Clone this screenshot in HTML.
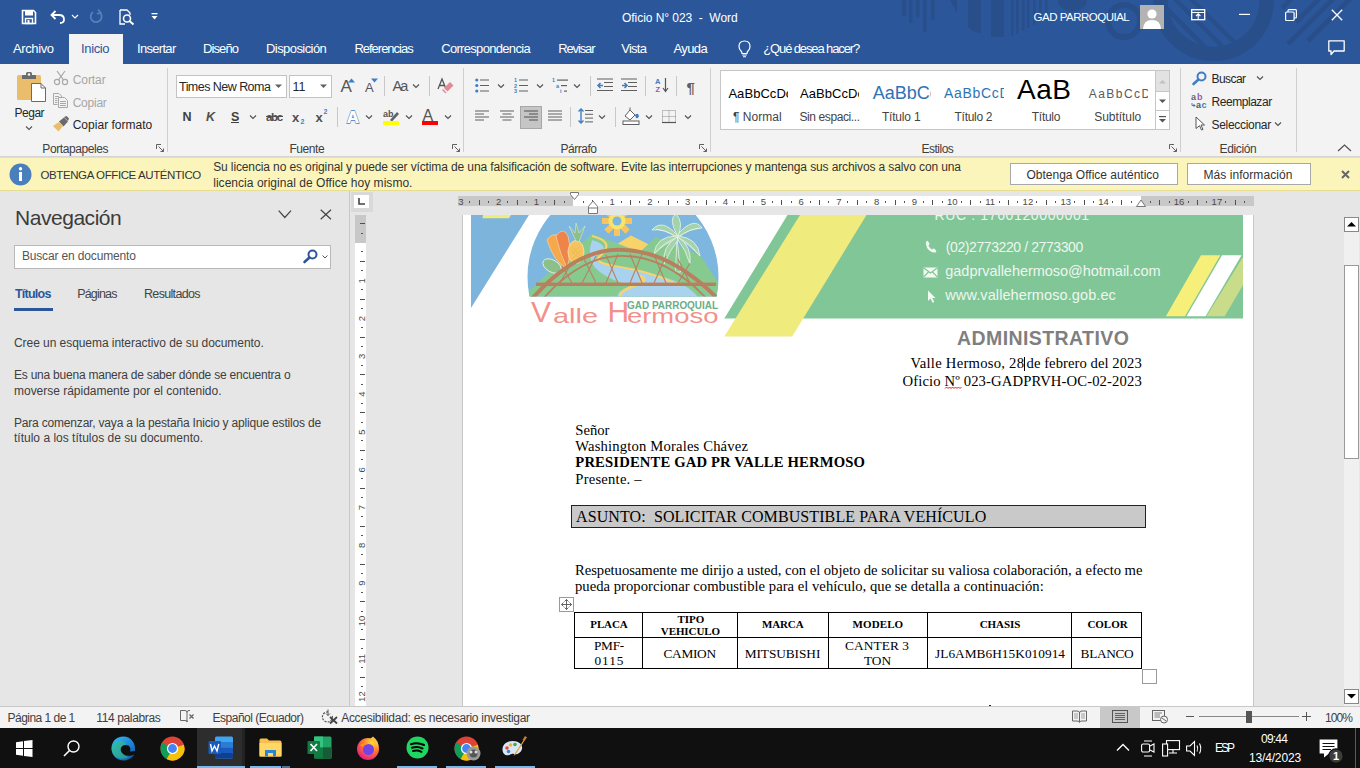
<!DOCTYPE html>
<html><head><meta charset="utf-8"><style>
html,body{margin:0;padding:0;width:1360px;height:768px;overflow:hidden;background:#e6e6e6}
.a{position:absolute}
.t{position:absolute;white-space:pre;line-height:1}
svg{position:absolute;overflow:visible}
</style></head><body>
<div class="a" style="left:0;top:0;width:1360px;height:64px;background:#2b579a"></div><svg class="a" style="left:0;top:0" width="1360" height="64" viewBox="0 0 1360 64">
<g fill="#294f8b">
<rect x="902" y="0" width="4" height="16"/><rect x="909" y="0" width="3.5" height="23"/><rect x="916" y="0" width="3.5" height="17"/>
<rect x="923" y="0" width="3.5" height="32"/><rect x="931" y="0" width="3.5" height="20"/>
<polygon points="950,0 957,0 957,13"/>
<path d="M968 0 H981 V33 Q974 33 968 27 Z"/>
<path d="M991 0 H1004 V37 H991 Z"/>
<rect x="1011" y="0" width="2.5" height="36"/><rect x="1016" y="0" width="2.5" height="34"/><rect x="1022" y="0" width="2.5" height="31"/><rect x="1027" y="0" width="2.5" height="28"/><rect x="1033" y="0" width="2.5" height="25"/><rect x="1039" y="0" width="2.5" height="21"/><rect x="1045" y="0" width="2.5" height="16"/>
<path d="M1058 0 A14 11 0 0 0 1087 0 Z"/>
</g>
<defs><clipPath id="tbin"><circle cx="1213.5" cy="1" r="46"/></clipPath></defs>
<g fill="none" stroke="#294f8b">
<circle cx="1124" cy="21" r="16" stroke-width="6"/>
<circle cx="1213.5" cy="1" r="53" stroke-width="14.5"/>
<g clip-path="url(#tbin)" stroke-width="4.5"><path d="M1150 -8 L1205 47 M1166 -10 L1222 46 M1180 -12 L1240 48"/></g>
<path d="M1282 8 L1292 -2 M1296 22 L1322 -4 M1288 44 L1336 -4 M1308 41 L1352 -3" stroke-width="5"/>
</g>
</svg><div class="a" style="left:69px;top:34px;width:54px;height:30px;background:#f3f3f3"></div><div class="a" style="left:0;top:64px;width:1360px;height:92px;background:#f3f3f3"></div><div class="a" style="left:0;top:156px;width:1360px;height:1px;background:#d4d4d4"></div><div class="a" style="left:0;top:157px;width:1360px;height:34px;background:#fcf5bb;border-top:1px solid #e9e19c;border-bottom:1px solid #e6dc92;box-sizing:border-box"></div><div class="a" style="left:0;top:191px;width:1360px;height:515px;background:#e6e6e6"></div><div class="a" style="left:349px;top:191px;width:1px;height:515px;background:#c8c8c8"></div><div class="a" style="left:0;top:706px;width:1360px;height:22px;background:#f3f3f3;border-top:1px solid #c8c8c8;box-sizing:border-box"></div><div class="a" style="left:0;top:728px;width:1360px;height:40px;background:#101010"></div><div class="t " style="left:622.00px;top:11.74px;font-size:12px;font-family:'Liberation Sans', sans-serif;font-weight:normal;color:#ffffff;letter-spacing:-0.047px;">Oficio N° 023  -  Word</div><div class="t " style="left:1033.50px;top:12.47px;font-size:11.5px;font-family:'Liberation Sans', sans-serif;font-weight:normal;color:#ffffff;letter-spacing:-0.494px;">GAD PARROQUIAL</div><div class="t " style="left:13.00px;top:42.00px;font-size:13px;font-family:'Liberation Sans', sans-serif;font-weight:normal;color:#ffffff;letter-spacing:-0.392px;">Archivo</div><div class="t " style="left:81.00px;top:42.00px;font-size:13px;font-family:'Liberation Sans', sans-serif;font-weight:normal;color:#2b579a;letter-spacing:-0.354px;">Inicio</div><div class="t " style="left:137.00px;top:42.00px;font-size:13px;font-family:'Liberation Sans', sans-serif;font-weight:normal;color:#ffffff;letter-spacing:-0.690px;">Insertar</div><div class="t " style="left:203.00px;top:42.00px;font-size:13px;font-family:'Liberation Sans', sans-serif;font-weight:normal;color:#ffffff;letter-spacing:-0.903px;">Diseño</div><div class="t " style="left:266.00px;top:42.00px;font-size:13px;font-family:'Liberation Sans', sans-serif;font-weight:normal;color:#ffffff;letter-spacing:-0.569px;">Disposición</div><div class="t " style="left:354.40px;top:42.00px;font-size:13px;font-family:'Liberation Sans', sans-serif;font-weight:normal;color:#ffffff;letter-spacing:-1.006px;">Referencias</div><div class="t " style="left:441.20px;top:42.00px;font-size:13px;font-family:'Liberation Sans', sans-serif;font-weight:normal;color:#ffffff;letter-spacing:-0.683px;">Correspondencia</div><div class="t " style="left:558.20px;top:42.00px;font-size:13px;font-family:'Liberation Sans', sans-serif;font-weight:normal;color:#ffffff;letter-spacing:-1.118px;">Revisar</div><div class="t " style="left:621.20px;top:42.00px;font-size:13px;font-family:'Liberation Sans', sans-serif;font-weight:normal;color:#ffffff;letter-spacing:-0.748px;">Vista</div><div class="t " style="left:673.50px;top:42.00px;font-size:13px;font-family:'Liberation Sans', sans-serif;font-weight:normal;color:#ffffff;letter-spacing:-0.606px;">Ayuda</div><div class="t " style="left:763.20px;top:42.00px;font-size:13px;font-family:'Liberation Sans', sans-serif;font-weight:normal;color:#ffffff;letter-spacing:-1.115px;">¿Qué desea hacer?</div><svg style="left:21px;top:9px" width="16" height="16" viewBox="0 0 16 16"><path d="M1.5 1.5 H12.5 L14.5 3.5 V14.5 H1.5 Z" fill="none" stroke="#fff" stroke-width="1.6"/><rect x="4" y="1.5" width="8" height="5" fill="#fff"/><rect x="4.5" y="9.5" width="7" height="5" fill="none" stroke="#fff" stroke-width="1.4"/><rect x="6.5" y="11" width="2" height="3.5" fill="#fff"/></svg><svg style="left:50px;top:9px" width="16" height="15" viewBox="0 0 16 15"><path d="M2 6 H9 Q14 6 14 10.5 Q14 14 10 14" fill="none" stroke="#fff" stroke-width="1.8"/><path d="M5.5 2 L1.5 6 L5.5 10" fill="none" stroke="#fff" stroke-width="1.8"/></svg><svg style="left:71px;top:14px" width="8" height="5" viewBox="0 0 8 5"><path d="M1 1 L4 4 L7 1" fill="none" stroke="#fff" stroke-width="1.1"/></svg><svg style="left:89px;top:9px" width="15" height="15" viewBox="0 0 15 15"><path d="M10.5 3.2 A5.5 5.5 0 1 1 4 3" fill="none" stroke="#5a7fb8" stroke-width="1.8"/><path d="M9 0.5 L11.5 3.5 L8 5" fill="none" stroke="#5a7fb8" stroke-width="1.6"/></svg><svg style="left:119px;top:9px" width="16" height="16" viewBox="0 0 16 16"><path d="M1 1 H8 L11 4 V6 M1 1 V15 H6" fill="none" stroke="#fff" stroke-width="1.3"/><circle cx="8" cy="9.5" r="3.5" fill="none" stroke="#fff" stroke-width="1.6"/><path d="M10.5 12 L14.5 15.5" stroke="#fff" stroke-width="2"/></svg><svg style="left:151px;top:13px" width="8" height="8" viewBox="0 0 8 8"><rect x="0.5" y="0" width="6" height="1.3" fill="#fff"/><path d="M0.5 3 H6.5 L3.5 6.5 Z" fill="#fff"/></svg><div class="a" style="left:1140px;top:5px;width:24px;height:24px;background:#b3b3b3;overflow:hidden"><svg style="left:0;top:0" width="24" height="24" viewBox="0 0 24 24"><circle cx="12" cy="9" r="4.6" fill="#fff"/><path d="M3 24 Q3.5 15 12 15 Q20.5 15 21 24 Z" fill="#fff"/></svg></div><svg style="left:1191px;top:9px" width="15" height="12" viewBox="0 0 15 12"><rect x="0.7" y="0.7" width="13" height="10" fill="none" stroke="#fff" stroke-width="1.3"/><path d="M0.7 3.5 H13.7" stroke="#fff" stroke-width="1"/><path d="M7.2 10 V5 M5 7 L7.2 4.8 L9.4 7" fill="none" stroke="#fff" stroke-width="1.1"/></svg><svg style="left:1239px;top:13px" width="11" height="3" viewBox="0 0 11 3"><rect x="0" y="0.8" width="11" height="1.2" fill="#fff"/></svg><svg style="left:1285px;top:9px" width="12" height="12" viewBox="0 0 12 12"><rect x="0.6" y="3" width="8.5" height="8.5" rx="1" fill="none" stroke="#fff" stroke-width="1.2"/><path d="M3 3 V1.5 Q3 0.6 4 0.6 H10.5 Q11.4 0.6 11.4 1.5 V8 Q11.4 9 10.5 9 H9" fill="none" stroke="#fff" stroke-width="1.2"/></svg><svg style="left:1331px;top:9px" width="12" height="12" viewBox="0 0 12 12"><path d="M0.8 0.8 L11.2 11.2 M11.2 0.8 L0.8 11.2" stroke="#fff" stroke-width="1.3"/></svg><svg style="left:1328px;top:40px" width="18" height="17" viewBox="0 0 18 17"><path d="M0.8 0.8 H16.2 V11 H6 L3 14.5 V11 H0.8 Z" fill="none" stroke="#fff" stroke-width="1.3" stroke-linejoin="round"/></svg><svg style="left:737px;top:40px" width="15" height="18" viewBox="0 0 15 18"><path d="M7.5 1 Q13 1 13 6.5 Q13 9 11 11 Q10 12 10 13.5 H5 Q5 12 4 11 Q2 9 2 6.5 Q2 1 7.5 1 Z" fill="none" stroke="#fff" stroke-width="1.2"/><path d="M5.2 15 H9.8 M6 16.8 H9" stroke="#fff" stroke-width="1.1"/></svg><svg style="left:9px;top:163px" width="23" height="23" viewBox="0 0 23 23"><circle cx="11.5" cy="11.5" r="11" fill="#4a7fbd"/><rect x="10" y="9" width="3" height="9" fill="#fff"/><circle cx="11.5" cy="5.8" r="1.7" fill="#fff"/></svg><div class="t " style="left:40.50px;top:169.87px;font-size:11.5px;font-family:'Liberation Sans', sans-serif;font-weight:normal;color:#333;letter-spacing:-0.401px;">OBTENGA OFFICE AUTÉNTICO</div><div class="t " style="left:213.20px;top:160.84px;font-size:12px;font-family:'Liberation Sans', sans-serif;font-weight:normal;color:#333;letter-spacing:-0.120px;">Su licencia no es original y puede ser víctima de una falsificación de software. Evite las interrupciones y mantenga sus archivos a salvo con una</div><div class="t " style="left:213.20px;top:177.04px;font-size:12px;font-family:'Liberation Sans', sans-serif;font-weight:normal;color:#333;letter-spacing:0.038px;">licencia original de Office hoy mismo.</div><div class="a" style="left:1010px;top:163px;width:168px;height:22px;background:#fff;border:1px solid #a8a8a8;box-sizing:border-box"></div><div class="t " style="left:1026.50px;top:169.04px;font-size:12px;font-family:'Liberation Sans', sans-serif;font-weight:normal;color:#333;letter-spacing:-0.001px;">Obtenga Office auténtico</div><div class="a" style="left:1187px;top:163px;width:124px;height:22px;background:#fff;border:1px solid #a8a8a8;box-sizing:border-box"></div><div class="t " style="left:1203.40px;top:169.44px;font-size:12px;font-family:'Liberation Sans', sans-serif;font-weight:normal;color:#333;letter-spacing:0.067px;">Más información</div><svg style="left:1341px;top:170px" width="9" height="9" viewBox="0 0 9 9"><path d="M1 1 L8 8 M8 1 L1 8" stroke="#666" stroke-width="2"/></svg><div class="a" style="left:167px;top:68px;width:1px;height:84px;background:#cfcfcf"></div><div class="a" style="left:463px;top:68px;width:1px;height:84px;background:#cfcfcf"></div><div class="a" style="left:710px;top:68px;width:1px;height:84px;background:#cfcfcf"></div><div class="a" style="left:1180px;top:68px;width:1px;height:84px;background:#cfcfcf"></div><div class="a" style="left:1296px;top:68px;width:1px;height:84px;background:#cfcfcf"></div><svg style="left:16px;top:71px;" width="32" height="33" viewBox="0 0 32 33">
<rect x="1" y="4" width="24" height="25" rx="1.5" fill="#e9bd6b"/>
<path d="M6 8 V5 Q6 4 7 4 H10 V2.5 Q10 1 11.5 1 H14.5 Q16 1 16 2.5 V4 H19 Q20 4 20 5 V8 Z" fill="#6a6a6a"/>
<circle cx="13" cy="3.5" r="1.3" fill="#f3f3f3"/>
<path d="M15.5 12.5 H25 L29.5 17 V30.5 H15.5 Z" fill="#fff" stroke="#6a6a6a" stroke-width="1"/>
<path d="M25 12.5 V17 H29.5" fill="none" stroke="#6a6a6a" stroke-width="1"/>
</svg><div class="t " style="left:14.60px;top:107.14px;font-size:12px;font-family:'Liberation Sans', sans-serif;font-weight:normal;color:#262626;letter-spacing:-0.516px;">Pegar</div><svg style="left:25px;top:125px" width="8" height="6" viewBox="0 0 8 6"><path d="M1 1.5 L4 4.5 L7 1.5" fill="none" stroke="#555" stroke-width="1.1"/></svg><svg style="left:53px;top:70px;" width="16" height="16" viewBox="0 0 16 16"><g fill="none" stroke="#a8a8a8" stroke-width="1.2"><circle cx="4" cy="12" r="2.6"/><circle cx="12" cy="12" r="2.6"/><path d="M5.5 9.8 L12 1 M10.5 9.8 L4 1"/></g></svg><div class="t " style="left:72.70px;top:73.74px;font-size:12px;font-family:'Liberation Sans', sans-serif;font-weight:normal;color:#a6a6a6;letter-spacing:-0.062px;">Cortar</div><svg style="left:53px;top:93px;" width="16" height="15" viewBox="0 0 16 15"><g fill="none" stroke="#a8a8a8" stroke-width="1"><path d="M0.5 0.5 H6 L8.5 3 V4.5 M0.5 0.5 V11.5 H4.5"/><path d="M2 3.5 H6 M2 5.5 H4.5 M2 7.5 H4.5 M2 9.5 H4.5"/><path d="M5.5 4.5 H11.5 L14.5 7.5 V14.5 H5.5 Z"/><path d="M7 8.5 H13 M7 10.5 H13 M7 12.5 H13"/></g></svg><div class="t " style="left:72.70px;top:96.74px;font-size:12px;font-family:'Liberation Sans', sans-serif;font-weight:normal;color:#a6a6a6;letter-spacing:-0.245px;">Copiar</div><svg style="left:52px;top:116px;" width="18" height="16" viewBox="0 0 18 16"><path d="M12 1 L14.5 0 L17 2.5 L16 5 Z" fill="#6a6a6a"/><path d="M7 5.5 L12 1.5 L16 5.5 L11.5 10.5 Z" fill="#6a6a6a"/><path d="M1 10 L7 6 L11 10 L6.5 15.5 Z" fill="#e9bd6b"/></svg><div class="t " style="left:72.70px;top:119.29px;font-size:12px;font-family:'Liberation Sans', sans-serif;font-weight:normal;color:#262626;letter-spacing:0.017px;">Copiar formato</div><div class="t " style="left:42.30px;top:143.34px;font-size:12px;font-family:'Liberation Sans', sans-serif;font-weight:normal;color:#404040;letter-spacing:-0.410px;">Portapapeles</div><svg style="left:156px;top:144px;" width="9" height="9" viewBox="0 0 9 9"><path d="M0.5 0.5 H5 M0.5 0.5 V5 M2.5 2.5 L7.5 7.5 M4.5 7.5 H7.5 V4.5" fill="none" stroke="#606060" stroke-width="1"/></svg><div class="a" style="left:176px;top:75px;width:111px;height:23px;background:#fff;border:1px solid #c3c3c3;box-sizing:border-box"></div><div class="a" style="left:289px;top:75px;width:43px;height:23px;background:#fff;border:1px solid #c3c3c3;box-sizing:border-box"></div><div class="t " style="left:179.00px;top:81.12px;font-size:12.5px;font-family:'Liberation Sans', sans-serif;font-weight:normal;color:#262626;letter-spacing:-0.538px;">Times New Roma</div><div class="t " style="left:292.50px;top:81.12px;font-size:12.5px;font-family:'Liberation Sans', sans-serif;font-weight:normal;color:#262626;">11</div><svg style="left:275px;top:84px;" width="8" height="5" viewBox="0 0 8 5"><path d="M0 0.5 H7 L3.5 4 Z" fill="#606060"/></svg><svg style="left:320px;top:84px;" width="8" height="5" viewBox="0 0 8 5"><path d="M0 0.5 H7 L3.5 4 Z" fill="#606060"/></svg><div class="t " style="left:340.50px;top:77.91px;font-size:17px;font-family:'Liberation Sans', sans-serif;font-weight:normal;color:#555555;">A</div><svg style="left:348px;top:78px;" width="8" height="5" viewBox="0 0 8 5"><path d="M0 4.5 H7 L3.5 0.5 Z" fill="#3f7ec4"/></svg><div class="t " style="left:365.00px;top:81.30px;font-size:13px;font-family:'Liberation Sans', sans-serif;font-weight:normal;color:#555555;">A</div><svg style="left:371px;top:78px;" width="8" height="5" viewBox="0 0 8 5"><path d="M0 0.5 H7 L3.5 4.5 Z" fill="#3f7ec4"/></svg><div class="a" style="left:384px;top:76px;width:1px;height:20px;background:#c8c8c8"></div><div class="t " style="left:392.50px;top:78.93px;font-size:14.5px;font-family:'Liberation Sans', sans-serif;font-weight:normal;color:#555555;letter-spacing:-1.957px;">Aa</div><svg style="left:412px;top:83px" width="8" height="6" viewBox="0 0 8 6"><path d="M1 1.5 L4 4.5 L7 1.5" fill="none" stroke="#505050" stroke-width="1.1"/></svg><div class="a" style="left:429px;top:76px;width:1px;height:20px;background:#c8c8c8"></div><svg style="left:437px;top:78px;" width="17" height="16" viewBox="0 0 17 16"><path d="M1 11 L5 1 L9 11 M2.5 7.5 H7.5" fill="none" stroke="#555" stroke-width="1.3"/><path d="M7 10 L13 4 L16.5 7.5 L10.5 13.5 Z" fill="#e48a96"/><path d="M6 11 L9.5 14.5 L8.5 15.5 L5 12 Z" fill="#e48a96"/></svg><div class="t " style="left:182.50px;top:111.02px;font-size:12.5px;font-family:'Liberation Sans', sans-serif;font-weight:bold;color:#404040;">N</div><div class="t " style="left:206.00px;top:111.02px;font-size:12.5px;font-family:'Liberation Sans', sans-serif;font-weight:bold;color:#505050;font-style:italic">K</div><div class="t " style="left:231.00px;top:111.02px;font-size:12.5px;font-family:'Liberation Sans', sans-serif;font-weight:bold;color:#404040;">S</div><div class="a" style="left:231px;top:122px;width:8px;height:1.3px;background:#404040"></div><svg style="left:249px;top:114px" width="8" height="6" viewBox="0 0 8 6"><path d="M1 1.5 L4 4.5 L7 1.5" fill="none" stroke="#505050" stroke-width="1.1"/></svg><div class="t " style="left:266.00px;top:111.87px;font-size:11.5px;font-family:'Liberation Sans', sans-serif;font-weight:bold;color:#505050;letter-spacing:-1.326px;">abc</div><div class="a" style="left:266px;top:116px;width:17px;height:1px;background:#505050"></div><div class="t " style="left:292.00px;top:110.60px;font-size:13px;font-family:'Liberation Sans', sans-serif;font-weight:bold;color:#505050;">x</div><div class="t " style="left:300.50px;top:117.77px;font-size:7px;font-family:'Liberation Sans', sans-serif;font-weight:bold;color:#3f7ec4;">2</div><div class="t " style="left:315.60px;top:110.60px;font-size:13px;font-family:'Liberation Sans', sans-serif;font-weight:bold;color:#505050;">x</div><div class="t " style="left:323.50px;top:107.77px;font-size:7px;font-family:'Liberation Sans', sans-serif;font-weight:bold;color:#3f7ec4;">2</div><div class="a" style="left:337px;top:107px;width:1px;height:20px;background:#c8c8c8"></div><svg style="left:345px;top:108px;" width="16" height="16" viewBox="0 0 16 16"><text x="8" y="14.5" text-anchor="middle" font-family="Liberation Sans" font-weight="bold" font-size="17" fill="#fff" stroke="#3f7ec4" stroke-width="1.4" paint-order="stroke">A</text><text x="8" y="14.5" text-anchor="middle" font-family="Liberation Sans" font-weight="bold" font-size="17" fill="#fff">A</text></svg><svg style="left:365px;top:114px" width="8" height="6" viewBox="0 0 8 6"><path d="M1 1.5 L4 4.5 L7 1.5" fill="none" stroke="#505050" stroke-width="1.1"/></svg><svg style="left:383px;top:109px;" width="17" height="17" viewBox="0 0 17 17"><text x="0" y="8" font-family="Liberation Sans" font-weight="bold" font-size="9" fill="#555">ab</text><path d="M7 11 L14 3 L16 5 L9 12.5 Z" fill="#606060"/><rect x="0" y="12" width="16" height="4" fill="#ffff00"/></svg><svg style="left:405px;top:114px" width="8" height="6" viewBox="0 0 8 6"><path d="M1 1.5 L4 4.5 L7 1.5" fill="none" stroke="#505050" stroke-width="1.1"/></svg><div class="t " style="left:422.50px;top:107.66px;font-size:16px;font-family:'Liberation Sans', sans-serif;font-weight:normal;color:#555555;">A</div><div class="a" style="left:422px;top:121px;width:16px;height:4px;background:#ff0000"></div><svg style="left:444px;top:114px" width="8" height="6" viewBox="0 0 8 6"><path d="M1 1.5 L4 4.5 L7 1.5" fill="none" stroke="#505050" stroke-width="1.1"/></svg><div class="t " style="left:289.40px;top:143.44px;font-size:12px;font-family:'Liberation Sans', sans-serif;font-weight:normal;color:#404040;letter-spacing:-0.429px;">Fuente</div><svg style="left:452px;top:144px;" width="9" height="9" viewBox="0 0 9 9"><path d="M0.5 0.5 H5 M0.5 0.5 V5 M2.5 2.5 L7.5 7.5 M4.5 7.5 H7.5 V4.5" fill="none" stroke="#606060" stroke-width="1"/></svg><svg style="left:475px;top:78px;" width="15" height="15" viewBox="0 0 15 15"><circle cx="1.8" cy="2" r="1.6" fill="#3f7ec4"/><circle cx="1.8" cy="7.5" r="1.6" fill="#3f7ec4"/><circle cx="1.8" cy="13" r="1.6" fill="#3f7ec4"/><rect x="5" y="1.5" width="9" height="1" fill="#606060"/><rect x="5" y="7.0" width="9" height="1" fill="#606060"/><rect x="5" y="12.5" width="9" height="1" fill="#606060"/></svg><svg style="left:497px;top:83px" width="8" height="6" viewBox="0 0 8 6"><path d="M1 1.5 L4 4.5 L7 1.5" fill="none" stroke="#505050" stroke-width="1.1"/></svg><svg style="left:514px;top:77px;" width="15" height="16" viewBox="0 0 15 16"><text x="0" y="5" font-size="5.5" font-family="Liberation Sans" font-weight="bold" fill="#3f7ec4">1</text><text x="0" y="10.5" font-size="5.5" font-family="Liberation Sans" font-weight="bold" fill="#3f7ec4">2</text><text x="0" y="16" font-size="5.5" font-family="Liberation Sans" font-weight="bold" fill="#3f7ec4">3</text><rect x="5" y="2.5" width="9" height="1" fill="#606060"/><rect x="5" y="8.0" width="9" height="1" fill="#606060"/><rect x="5" y="13.5" width="9" height="1" fill="#606060"/></svg><svg style="left:536px;top:83px" width="8" height="6" viewBox="0 0 8 6"><path d="M1 1.5 L4 4.5 L7 1.5" fill="none" stroke="#505050" stroke-width="1.1"/></svg><svg style="left:552px;top:77px;" width="17" height="16" viewBox="0 0 17 16"><text x="0" y="5" font-size="5.5" font-family="Liberation Sans" font-weight="bold" fill="#3f7ec4">1</text><text x="4" y="10.5" font-size="5.5" font-family="Liberation Sans" font-weight="bold" fill="#3f7ec4">a</text><text x="8" y="16" font-size="5.5" font-family="Liberation Sans" font-weight="bold" fill="#3f7ec4">i</text><rect x="5" y="2.5" width="11" height="1.2" fill="#606060"/><rect x="9" y="8" width="6" height="1.2" fill="#606060"/><rect x="12" y="13.5" width="3" height="1.2" fill="#606060"/></svg><svg style="left:573px;top:83px" width="8" height="6" viewBox="0 0 8 6"><path d="M1 1.5 L4 4.5 L7 1.5" fill="none" stroke="#505050" stroke-width="1.1"/></svg><div class="a" style="left:590px;top:76px;width:1px;height:20px;background:#c8c8c8"></div><svg style="left:597px;top:78px;" width="17" height="14" viewBox="0 0 17 14"><rect x="0" y="0.5" width="16" height="1" fill="#606060"/><rect x="7" y="4" width="9" height="1" fill="#606060"/><rect x="7" y="8" width="9" height="1" fill="#606060"/><rect x="0" y="12" width="16" height="1" fill="#606060"/><path d="M6 7.5 H1 M3.5 5 L1 7.5 L3.5 10" fill="none" stroke="#3f7ec4" stroke-width="1.6"/></svg><svg style="left:621px;top:78px;" width="17" height="14" viewBox="0 0 17 14"><rect x="0" y="0.5" width="16" height="1" fill="#606060"/><rect x="7" y="4" width="9" height="1" fill="#606060"/><rect x="7" y="8" width="9" height="1" fill="#606060"/><rect x="0" y="12" width="16" height="1" fill="#606060"/><path d="M1 7.5 H6 M3.5 5 L6 7.5 L3.5 10" fill="none" stroke="#3f7ec4" stroke-width="1.6"/></svg><div class="a" style="left:645px;top:76px;width:1px;height:20px;background:#c8c8c8"></div><svg style="left:655px;top:77px;" width="14" height="16" viewBox="0 0 14 16"><text x="0" y="7" font-size="7.5" font-family="Liberation Sans" font-weight="bold" fill="#3f7ec4">A</text><text x="0.5" y="15" font-size="7.5" font-family="Liberation Sans" font-weight="bold" fill="#8b5fb8">Z</text><path d="M10.5 1 V14 M8 11 L10.5 14.5 L13 11" fill="none" stroke="#555" stroke-width="1.2"/></svg><div class="a" style="left:676px;top:76px;width:1px;height:20px;background:#c8c8c8"></div><div class="t " style="left:686.50px;top:80.00px;font-size:15px;font-family:'Liberation Sans', sans-serif;font-weight:bold;color:#606060;">¶</div><svg style="left:475px;top:110px;" width="15" height="12" viewBox="0 0 15 12"><rect x="0" y="0.5" width="14" height="1" fill="#606060"/><rect x="0" y="3.5" width="9" height="1" fill="#606060"/><rect x="0" y="6.5" width="14" height="1" fill="#606060"/><rect x="0" y="9.5" width="9" height="1" fill="#606060"/></svg><svg style="left:500px;top:110px;" width="15" height="12" viewBox="0 0 15 12"><rect x="0" y="0.5" width="14" height="1" fill="#606060"/><rect x="2.5" y="3.5" width="9" height="1" fill="#606060"/><rect x="0" y="6.5" width="14" height="1" fill="#606060"/><rect x="2.5" y="9.5" width="9" height="1" fill="#606060"/></svg><div class="a" style="left:520px;top:106px;width:22px;height:23px;background:#c5c5c5;border:1px solid #a8a8a8;box-sizing:border-box"></div><svg style="left:524px;top:110px;" width="15" height="12" viewBox="0 0 15 12"><rect x="0" y="0.5" width="14" height="1" fill="#505050"/><rect x="5" y="3.5" width="9" height="1" fill="#505050"/><rect x="0" y="6.5" width="14" height="1" fill="#505050"/><rect x="5" y="9.5" width="9" height="1" fill="#505050"/></svg><svg style="left:548px;top:110px;" width="15" height="12" viewBox="0 0 15 12"><rect x="0" y="0.5" width="14" height="1" fill="#606060"/><rect x="0" y="3.5" width="14" height="1" fill="#606060"/><rect x="0" y="6.5" width="14" height="1" fill="#606060"/><rect x="0" y="9.5" width="14" height="1" fill="#606060"/></svg><div class="a" style="left:570px;top:107px;width:1px;height:20px;background:#c8c8c8"></div><svg style="left:578px;top:108px;" width="16" height="16" viewBox="0 0 16 16"><path d="M3 1 V15 M0.5 3.5 L3 1 L5.5 3.5 M0.5 12.5 L3 15 L5.5 12.5" fill="none" stroke="#3f7ec4" stroke-width="1.4"/><rect x="7" y="2.0" width="8" height="1" fill="#606060"/><rect x="7" y="5.8" width="8" height="1" fill="#606060"/><rect x="7" y="9.6" width="8" height="1" fill="#606060"/><rect x="7" y="13.399999999999999" width="8" height="1" fill="#606060"/></svg><svg style="left:598px;top:114px" width="8" height="6" viewBox="0 0 8 6"><path d="M1 1.5 L4 4.5 L7 1.5" fill="none" stroke="#505050" stroke-width="1.1"/></svg><div class="a" style="left:615px;top:107px;width:1px;height:20px;background:#c8c8c8"></div><svg style="left:622px;top:107px;" width="18" height="18" viewBox="0 0 18 18"><path d="M3 9 L8 3 L13 8 L8 13 Z" fill="#fff" stroke="#606060" stroke-width="1"/><path d="M8 3 V0.5" stroke="#606060"/><path d="M13 8 Q16 5 17 9 Q16 12 14 11 Z" fill="#3f7ec4"/><rect x="1" y="14" width="16" height="3.5" fill="#fff" stroke="#606060" stroke-width="1"/></svg><svg style="left:645px;top:114px" width="8" height="6" viewBox="0 0 8 6"><path d="M1 1.5 L4 4.5 L7 1.5" fill="none" stroke="#505050" stroke-width="1.1"/></svg><svg style="left:662px;top:110px;" width="15" height="14" viewBox="0 0 15 14"><rect x="0.5" y="0.5" width="13" height="12" fill="none" stroke="#888" stroke-width="1" stroke-dasharray="1 1"/><path d="M7 0.5 V12.5 M0.5 6.5 H13.5" stroke="#888" stroke-dasharray="1 1"/><path d="M0 12.5 H14" stroke="#555" stroke-width="1.2"/></svg><svg style="left:684px;top:114px" width="8" height="6" viewBox="0 0 8 6"><path d="M1 1.5 L4 4.5 L7 1.5" fill="none" stroke="#505050" stroke-width="1.1"/></svg><div class="t " style="left:560.40px;top:143.14px;font-size:12px;font-family:'Liberation Sans', sans-serif;font-weight:normal;color:#404040;letter-spacing:-0.469px;">Párrafo</div><svg style="left:699px;top:144px;" width="9" height="9" viewBox="0 0 9 9"><path d="M0.5 0.5 H5 M0.5 0.5 V5 M2.5 2.5 L7.5 7.5 M4.5 7.5 H7.5 V4.5" fill="none" stroke="#606060" stroke-width="1"/></svg><div class="a" style="left:720px;top:70px;width:450px;height:60px;background:#fff;border:1px solid #c6c6c6;box-sizing:border-box"></div><div class="a" style="left:1155px;top:70px;width:15px;height:60px;border:1px solid #c6c6c6;box-sizing:border-box;background:#fff"></div><div class="a" style="left:1156px;top:71px;width:13px;height:20px;background:#e2e2e2"></div><div class="a" style="left:1155px;top:91px;width:15px;height:1px;background:#c6c6c6"></div><div class="a" style="left:1155px;top:110px;width:15px;height:1px;background:#c6c6c6"></div><svg style="left:1159px;top:79px;" width="8" height="5" viewBox="0 0 8 5"><path d="M0 4.5 H7 L3.5 1 Z" fill="#c0c0c0"/></svg><svg style="left:1159px;top:99px;" width="8" height="5" viewBox="0 0 8 5"><path d="M0 0.5 H7 L3.5 4 Z" fill="#555"/></svg><svg style="left:1159px;top:116px;" width="8" height="8" viewBox="0 0 8 8"><rect x="0" y="0" width="7" height="1.2" fill="#555"/><path d="M0 3 H7 L3.5 6.5 Z" fill="#555"/></svg><div class="a" style="left:728px;top:72px;width:60px;height:36px;overflow:hidden"><div class="t " style="left:0.40px;top:14.90px;font-size:13px;font-family:'Liberation Sans', sans-serif;font-weight:normal;color:#000;letter-spacing:0.056px;">AaBbCcDc</div></div><div class="a" style="left:800px;top:72px;width:59px;height:36px;overflow:hidden"><div class="t " style="left:0.00px;top:14.90px;font-size:13px;font-family:'Liberation Sans', sans-serif;font-weight:normal;color:#000;letter-spacing:0.056px;">AaBbCcDc</div></div><div class="a" style="left:872px;top:72px;width:59px;height:36px;overflow:hidden"><div class="t " style="left:0.70px;top:12.06px;font-size:18px;font-family:'Liberation Sans', sans-serif;font-weight:normal;color:#2e74b5;letter-spacing:-0.006px;">AaBbCc</div></div><div class="a" style="left:944px;top:72px;width:60px;height:36px;overflow:hidden"><div class="t " style="left:0.00px;top:14.05px;font-size:14px;font-family:'Liberation Sans', sans-serif;font-weight:normal;color:#2e74b5;letter-spacing:0.697px;">AaBbCcD</div></div><div class="t " style="left:1017.00px;top:75.60px;font-size:28px;font-family:'Liberation Sans', sans-serif;font-weight:normal;color:#000;letter-spacing:0.550px;">AaB</div><div class="a" style="left:1088px;top:72px;width:60px;height:36px;overflow:hidden"><div class="t " style="left:0.80px;top:15.74px;font-size:12px;font-family:'Liberation Sans', sans-serif;font-weight:normal;color:#5a5a5a;letter-spacing:1.433px;">AaBbCcD</div></div><div class="t " style="left:733.00px;top:111.24px;font-size:12px;font-family:'Liberation Sans', sans-serif;font-weight:normal;color:#444;letter-spacing:0.033px;">¶ Normal</div><div class="t " style="left:799.50px;top:111.24px;font-size:12px;font-family:'Liberation Sans', sans-serif;font-weight:normal;color:#444;letter-spacing:-0.405px;">Sin espaci...</div><div class="t " style="left:881.90px;top:111.24px;font-size:12px;font-family:'Liberation Sans', sans-serif;font-weight:normal;color:#444;letter-spacing:-0.189px;">Título 1</div><div class="t " style="left:954.60px;top:111.24px;font-size:12px;font-family:'Liberation Sans', sans-serif;font-weight:normal;color:#444;letter-spacing:-0.309px;">Título 2</div><div class="t " style="left:1031.80px;top:111.24px;font-size:12px;font-family:'Liberation Sans', sans-serif;font-weight:normal;color:#444;letter-spacing:-0.275px;">Título</div><div class="t " style="left:1094.30px;top:111.24px;font-size:12px;font-family:'Liberation Sans', sans-serif;font-weight:normal;color:#444;letter-spacing:-0.055px;">Subtítulo</div><div class="t " style="left:921.40px;top:142.94px;font-size:12px;font-family:'Liberation Sans', sans-serif;font-weight:normal;color:#404040;letter-spacing:-0.484px;">Estilos</div><svg style="left:1169px;top:144px;" width="9" height="9" viewBox="0 0 9 9"><path d="M0.5 0.5 H5 M0.5 0.5 V5 M2.5 2.5 L7.5 7.5 M4.5 7.5 H7.5 V4.5" fill="none" stroke="#606060" stroke-width="1"/></svg><svg style="left:1192px;top:71px;" width="16" height="14" viewBox="0 0 16 14"><circle cx="9.5" cy="5.5" r="4" fill="none" stroke="#3f7ec4" stroke-width="2"/><path d="M6.5 8.5 L1.5 13" stroke="#3f7ec4" stroke-width="2.6" stroke-linecap="round"/></svg><div class="t " style="left:1211.50px;top:72.94px;font-size:12px;font-family:'Liberation Sans', sans-serif;font-weight:normal;color:#262626;letter-spacing:-0.572px;">Buscar</div><svg style="left:1256px;top:75px" width="8" height="6" viewBox="0 0 8 6"><path d="M1 1.5 L4 4.5 L7 1.5" fill="none" stroke="#505050" stroke-width="1.1"/></svg><svg style="left:1191px;top:93px;" width="18" height="16" viewBox="0 0 18 16"><text x="0" y="7" font-family="Liberation Sans" font-weight="bold" font-size="9" fill="#666">a</text><text x="6" y="7" font-family="Liberation Sans" font-weight="bold" font-size="9" fill="#8b5fb8">b</text><text x="5" y="15" font-family="Liberation Sans" font-weight="bold" font-size="9" fill="#555">a</text><text x="10.5" y="15" font-family="Liberation Sans" font-weight="bold" font-size="9" fill="#3f7ec4">c</text><path d="M1 10 V12.5 H4 M2.5 11 L4 12.5 L2.5 14" fill="none" stroke="#3f7ec4" stroke-width="1"/></svg><div class="t " style="left:1211.50px;top:96.14px;font-size:12px;font-family:'Liberation Sans', sans-serif;font-weight:normal;color:#262626;letter-spacing:-0.452px;">Reemplazar</div><svg style="left:1195px;top:116px;" width="11" height="15" viewBox="0 0 11 15"><path d="M1 1 L9.5 9 H6 L8 13.5 L6.5 14 L4.5 9.7 L1 12.5 Z" fill="#fff" stroke="#555" stroke-width="1"/></svg><div class="t " style="left:1211.50px;top:118.84px;font-size:12px;font-family:'Liberation Sans', sans-serif;font-weight:normal;color:#262626;letter-spacing:-0.305px;">Seleccionar</div><svg style="left:1274px;top:121px" width="8" height="6" viewBox="0 0 8 6"><path d="M1 1.5 L4 4.5 L7 1.5" fill="none" stroke="#505050" stroke-width="1.1"/></svg><div class="t " style="left:1219.60px;top:143.34px;font-size:12px;font-family:'Liberation Sans', sans-serif;font-weight:normal;color:#404040;letter-spacing:-0.363px;">Edición</div><svg style="left:1337px;top:144px;" width="15" height="8" viewBox="0 0 15 8"><path d="M1 7 L7.5 1 L14 7" fill="none" stroke="#505050" stroke-width="1.2"/></svg><div class="t " style="left:15.00px;top:207.42px;font-size:21px;font-family:'Liberation Sans', sans-serif;font-weight:normal;color:#3c3c3c;letter-spacing:-0.464px;">Navegación</div><svg style="left:278px;top:210px" width="14" height="9" viewBox="0 0 14 9"><path d="M0.7 0.7 L6.8 7.5 L13 0.7" fill="none" stroke="#444" stroke-width="1.2"/></svg><svg style="left:320px;top:209px" width="12" height="11" viewBox="0 0 12 11"><path d="M0.7 0.7 L11 10.3 M11 0.7 L0.7 10.3" stroke="#444" stroke-width="1.2"/></svg><div class="a" style="left:14px;top:245px;width:317px;height:24px;background:#fff;border:1px solid #b9b9b9;box-sizing:border-box"></div><div class="t " style="left:21.90px;top:249.94px;font-size:12px;font-family:'Liberation Sans', sans-serif;font-weight:normal;color:#555;letter-spacing:-0.148px;">Buscar en documento</div><svg style="left:303px;top:249px" width="15" height="14" viewBox="0 0 15 14"><circle cx="9.5" cy="5.5" r="4" fill="none" stroke="#2b579a" stroke-width="2"/><path d="M6.5 8.5 L1.5 13" stroke="#2b579a" stroke-width="2.6" stroke-linecap="round"/></svg><svg style="left:322px;top:255px" width="6" height="4" viewBox="0 0 6 4"><path d="M0.5 0.5 L3 3 L5.5 0.5" fill="none" stroke="#555" stroke-width="1"/></svg><div class="t " style="left:15.00px;top:288.12px;font-size:12.5px;font-family:'Liberation Sans', sans-serif;font-weight:bold;color:#2b579a;letter-spacing:-0.764px;">Títulos</div><div class="t " style="left:77.20px;top:288.12px;font-size:12.5px;font-family:'Liberation Sans', sans-serif;font-weight:normal;color:#444;letter-spacing:-0.826px;">Páginas</div><div class="t " style="left:144.00px;top:288.12px;font-size:12.5px;font-family:'Liberation Sans', sans-serif;font-weight:normal;color:#444;letter-spacing:-0.667px;">Resultados</div><div class="a" style="left:14px;top:308px;width:39px;height:3px;background:#2b579a"></div><div class="t " style="left:14.00px;top:337.14px;font-size:12px;font-family:'Liberation Sans', sans-serif;font-weight:normal;color:#404040;letter-spacing:-0.056px;">Cree un esquema interactivo de su documento.</div><div class="t " style="left:14.00px;top:368.94px;font-size:12px;font-family:'Liberation Sans', sans-serif;font-weight:normal;color:#404040;letter-spacing:-0.228px;">Es una buena manera de saber dónde se encuentra o</div><div class="t " style="left:14.00px;top:385.14px;font-size:12px;font-family:'Liberation Sans', sans-serif;font-weight:normal;color:#404040;letter-spacing:-0.017px;">moverse rápidamente por el contenido.</div><div class="t " style="left:14.00px;top:416.94px;font-size:12px;font-family:'Liberation Sans', sans-serif;font-weight:normal;color:#404040;letter-spacing:-0.188px;">Para comenzar, vaya a la pestaña Inicio y aplique estilos de</div><div class="t " style="left:14.00px;top:432.44px;font-size:12px;font-family:'Liberation Sans', sans-serif;font-weight:normal;color:#404040;letter-spacing:0.006px;">título a los títulos de su documento.</div><div class="a" style="left:351px;top:192px;width:22px;height:20px;background:#d9d9d9"></div><div class="a" style="left:354px;top:195px;width:15px;height:13px;background:#fff"></div><svg style="left:358px;top:198px;" width="8" height="8" viewBox="0 0 8 8"><path d="M1 0 V6 H7" fill="none" stroke="#444" stroke-width="1.6"/></svg><div class="a" style="left:458px;top:196px;width:796px;height:10px;background:#c8c8c8"></div><div class="a" style="left:573px;top:196px;width:568px;height:10px;background:#fff"></div><svg style="left:0;top:196px" width="1360" height="12" viewBox="0 0 1360 12"><text x="460.9" y="9" font-family="Liberation Sans" font-size="9.5" fill="#4a4a4a" text-anchor="middle">3</text><rect x="469" y="5" width="1" height="2" fill="#555"/><rect x="479" y="4" width="1" height="5" fill="#505050"/><rect x="488" y="5" width="1" height="2" fill="#555"/><text x="498.7" y="9" font-family="Liberation Sans" font-size="9.5" fill="#4a4a4a" text-anchor="middle">2</text><rect x="507" y="5" width="1" height="2" fill="#555"/><rect x="517" y="4" width="1" height="5" fill="#505050"/><rect x="526" y="5" width="1" height="2" fill="#555"/><text x="536.5" y="9" font-family="Liberation Sans" font-size="9.5" fill="#4a4a4a" text-anchor="middle">1</text><rect x="545" y="5" width="1" height="2" fill="#555"/><rect x="554" y="4" width="1" height="5" fill="#505050"/><rect x="564" y="5" width="1" height="2" fill="#555"/><rect x="583" y="5" width="1" height="2" fill="#555"/><rect x="592" y="4" width="1" height="5" fill="#505050"/><rect x="602" y="5" width="1" height="2" fill="#555"/><text x="612.1" y="9" font-family="Liberation Sans" font-size="9.5" fill="#4a4a4a" text-anchor="middle">1</text><rect x="621" y="5" width="1" height="2" fill="#555"/><rect x="630" y="4" width="1" height="5" fill="#505050"/><rect x="639" y="5" width="1" height="2" fill="#555"/><text x="649.9" y="9" font-family="Liberation Sans" font-size="9.5" fill="#4a4a4a" text-anchor="middle">2</text><rect x="658" y="5" width="1" height="2" fill="#555"/><rect x="668" y="4" width="1" height="5" fill="#505050"/><rect x="677" y="5" width="1" height="2" fill="#555"/><text x="687.7" y="9" font-family="Liberation Sans" font-size="9.5" fill="#4a4a4a" text-anchor="middle">3</text><rect x="696" y="5" width="1" height="2" fill="#555"/><rect x="706" y="4" width="1" height="5" fill="#505050"/><rect x="715" y="5" width="1" height="2" fill="#555"/><text x="725.5" y="9" font-family="Liberation Sans" font-size="9.5" fill="#4a4a4a" text-anchor="middle">4</text><rect x="734" y="5" width="1" height="2" fill="#555"/><rect x="743" y="4" width="1" height="5" fill="#505050"/><rect x="753" y="5" width="1" height="2" fill="#555"/><text x="763.3" y="9" font-family="Liberation Sans" font-size="9.5" fill="#4a4a4a" text-anchor="middle">5</text><rect x="772" y="5" width="1" height="2" fill="#555"/><rect x="781" y="4" width="1" height="5" fill="#505050"/><rect x="791" y="5" width="1" height="2" fill="#555"/><text x="801.1" y="9" font-family="Liberation Sans" font-size="9.5" fill="#4a4a4a" text-anchor="middle">6</text><rect x="810" y="5" width="1" height="2" fill="#555"/><rect x="819" y="4" width="1" height="5" fill="#505050"/><rect x="828" y="5" width="1" height="2" fill="#555"/><text x="838.9" y="9" font-family="Liberation Sans" font-size="9.5" fill="#4a4a4a" text-anchor="middle">7</text><rect x="847" y="5" width="1" height="2" fill="#555"/><rect x="857" y="4" width="1" height="5" fill="#505050"/><rect x="866" y="5" width="1" height="2" fill="#555"/><text x="876.7" y="9" font-family="Liberation Sans" font-size="9.5" fill="#4a4a4a" text-anchor="middle">8</text><rect x="885" y="5" width="1" height="2" fill="#555"/><rect x="895" y="4" width="1" height="5" fill="#505050"/><rect x="904" y="5" width="1" height="2" fill="#555"/><text x="914.5" y="9" font-family="Liberation Sans" font-size="9.5" fill="#4a4a4a" text-anchor="middle">9</text><rect x="923" y="5" width="1" height="2" fill="#555"/><rect x="932" y="4" width="1" height="5" fill="#505050"/><rect x="942" y="5" width="1" height="2" fill="#555"/><text x="952.3" y="9" font-family="Liberation Sans" font-size="9.5" fill="#4a4a4a" text-anchor="middle">10</text><rect x="961" y="5" width="1" height="2" fill="#555"/><rect x="970" y="4" width="1" height="5" fill="#505050"/><rect x="980" y="5" width="1" height="2" fill="#555"/><text x="990.1" y="9" font-family="Liberation Sans" font-size="9.5" fill="#4a4a4a" text-anchor="middle">11</text><rect x="999" y="5" width="1" height="2" fill="#555"/><rect x="1008" y="4" width="1" height="5" fill="#505050"/><rect x="1017" y="5" width="1" height="2" fill="#555"/><text x="1027.9" y="9" font-family="Liberation Sans" font-size="9.5" fill="#4a4a4a" text-anchor="middle">12</text><rect x="1036" y="5" width="1" height="2" fill="#555"/><rect x="1046" y="4" width="1" height="5" fill="#505050"/><rect x="1055" y="5" width="1" height="2" fill="#555"/><text x="1065.7" y="9" font-family="Liberation Sans" font-size="9.5" fill="#4a4a4a" text-anchor="middle">13</text><rect x="1074" y="5" width="1" height="2" fill="#555"/><rect x="1084" y="4" width="1" height="5" fill="#505050"/><rect x="1093" y="5" width="1" height="2" fill="#555"/><text x="1103.5" y="9" font-family="Liberation Sans" font-size="9.5" fill="#4a4a4a" text-anchor="middle">14</text><rect x="1112" y="5" width="1" height="2" fill="#555"/><rect x="1121" y="4" width="1" height="5" fill="#505050"/><rect x="1131" y="5" width="1" height="2" fill="#555"/><rect x="1150" y="5" width="1" height="2" fill="#555"/><rect x="1159" y="4" width="1" height="5" fill="#505050"/><rect x="1169" y="5" width="1" height="2" fill="#555"/><text x="1179.1" y="9" font-family="Liberation Sans" font-size="9.5" fill="#4a4a4a" text-anchor="middle">16</text><rect x="1188" y="5" width="1" height="2" fill="#555"/><rect x="1197" y="4" width="1" height="5" fill="#505050"/><rect x="1206" y="5" width="1" height="2" fill="#555"/><text x="1216.9" y="9" font-family="Liberation Sans" font-size="9.5" fill="#4a4a4a" text-anchor="middle">17</text><rect x="1225" y="5" width="1" height="2" fill="#555"/><rect x="1235" y="4" width="1" height="5" fill="#505050"/><rect x="1244" y="5" width="1" height="2" fill="#555"/></svg><svg style="left:570px;top:192px;" width="10" height="9" viewBox="0 0 10 9"><path d="M0.5 0.5 H8.5 V2.5 L4.5 7.5 L0.5 2.5 Z" fill="#fff" stroke="#777" stroke-width="1"/></svg><svg style="left:588px;top:200px;" width="11" height="15" viewBox="0 0 11 15"><path d="M0.5 6.5 L5 1 L9.5 6.5 V13.5 H0.5 Z M0.5 8 H9.5" fill="#fff" stroke="#777" stroke-width="1"/></svg><svg style="left:1136px;top:199px;" width="11" height="9" viewBox="0 0 11 9"><path d="M0.5 7.5 L5 1 L9.5 7.5 Z" fill="#fff" stroke="#777" stroke-width="1"/></svg><div class="a" style="left:355px;top:215px;width:11px;height:491px;background:#fff"></div><div class="a" style="left:355px;top:215px;width:11px;height:28px;background:#c8c8c8"></div><svg style="left:355px;top:0" width="11" height="706" viewBox="0 0 11 706"><rect x="5" y="223.0" width="5" height="1" fill="#505050"/><rect x="6" y="233" width="2" height="1" fill="#555"/><rect x="6" y="251" width="2" height="1" fill="#555"/><rect x="5" y="261.0" width="5" height="1" fill="#505050"/><rect x="6" y="270" width="2" height="1" fill="#555"/><text transform="translate(9.7 280.8) rotate(-90)" x="0" y="0" font-family="Liberation Sans" font-size="9.5" fill="#4a4a4a" text-anchor="middle">1</text><rect x="6" y="289" width="2" height="1" fill="#555"/><rect x="5" y="299.0" width="5" height="1" fill="#505050"/><rect x="6" y="308" width="2" height="1" fill="#555"/><text transform="translate(9.7 318.6) rotate(-90)" x="0" y="0" font-family="Liberation Sans" font-size="9.5" fill="#4a4a4a" text-anchor="middle">2</text><rect x="6" y="327" width="2" height="1" fill="#555"/><rect x="5" y="337.0" width="5" height="1" fill="#505050"/><rect x="6" y="346" width="2" height="1" fill="#555"/><text transform="translate(9.7 356.4) rotate(-90)" x="0" y="0" font-family="Liberation Sans" font-size="9.5" fill="#4a4a4a" text-anchor="middle">3</text><rect x="6" y="365" width="2" height="1" fill="#555"/><rect x="5" y="374.0" width="5" height="1" fill="#505050"/><rect x="6" y="384" width="2" height="1" fill="#555"/><text transform="translate(9.7 394.2) rotate(-90)" x="0" y="0" font-family="Liberation Sans" font-size="9.5" fill="#4a4a4a" text-anchor="middle">4</text><rect x="6" y="403" width="2" height="1" fill="#555"/><rect x="5" y="412.0" width="5" height="1" fill="#505050"/><rect x="6" y="422" width="2" height="1" fill="#555"/><text transform="translate(9.7 432.0) rotate(-90)" x="0" y="0" font-family="Liberation Sans" font-size="9.5" fill="#4a4a4a" text-anchor="middle">5</text><rect x="6" y="440" width="2" height="1" fill="#555"/><rect x="5" y="450.0" width="5" height="1" fill="#505050"/><rect x="6" y="459" width="2" height="1" fill="#555"/><text transform="translate(9.7 469.8) rotate(-90)" x="0" y="0" font-family="Liberation Sans" font-size="9.5" fill="#4a4a4a" text-anchor="middle">6</text><rect x="6" y="478" width="2" height="1" fill="#555"/><rect x="5" y="488.0" width="5" height="1" fill="#505050"/><rect x="6" y="497" width="2" height="1" fill="#555"/><text transform="translate(9.7 507.6) rotate(-90)" x="0" y="0" font-family="Liberation Sans" font-size="9.5" fill="#4a4a4a" text-anchor="middle">7</text><rect x="6" y="516" width="2" height="1" fill="#555"/><rect x="5" y="526.0" width="5" height="1" fill="#505050"/><rect x="6" y="535" width="2" height="1" fill="#555"/><text transform="translate(9.7 545.4) rotate(-90)" x="0" y="0" font-family="Liberation Sans" font-size="9.5" fill="#4a4a4a" text-anchor="middle">8</text><rect x="6" y="554" width="2" height="1" fill="#555"/><rect x="5" y="564.0" width="5" height="1" fill="#505050"/><rect x="6" y="573" width="2" height="1" fill="#555"/><text transform="translate(9.7 583.2) rotate(-90)" x="0" y="0" font-family="Liberation Sans" font-size="9.5" fill="#4a4a4a" text-anchor="middle">9</text><rect x="6" y="592" width="2" height="1" fill="#555"/><rect x="5" y="601.0" width="5" height="1" fill="#505050"/><rect x="6" y="611" width="2" height="1" fill="#555"/><text transform="translate(9.7 621.0) rotate(-90)" x="0" y="0" font-family="Liberation Sans" font-size="9.5" fill="#4a4a4a" text-anchor="middle">10</text><rect x="6" y="629" width="2" height="1" fill="#555"/><rect x="5" y="639.0" width="5" height="1" fill="#505050"/><rect x="6" y="648" width="2" height="1" fill="#555"/><text transform="translate(9.7 658.8) rotate(-90)" x="0" y="0" font-family="Liberation Sans" font-size="9.5" fill="#4a4a4a" text-anchor="middle">11</text><rect x="6" y="667" width="2" height="1" fill="#555"/><rect x="5" y="677.0" width="5" height="1" fill="#505050"/><rect x="6" y="686" width="2" height="1" fill="#555"/><text transform="translate(9.7 696.6) rotate(-90)" x="0" y="0" font-family="Liberation Sans" font-size="9.5" fill="#4a4a4a" text-anchor="middle">12</text></svg><div class="a" style="left:462px;top:215px;width:792px;height:491px;background:#fff;border-left:1px solid #c6c6c6;border-right:1px solid #c6c6c6;box-sizing:border-box"></div><div class="a" style="left:1344px;top:217px;width:15px;height:489px;background:#f0f0f0"></div><div class="a" style="left:1344px;top:217px;width:15px;height:15px;background:#fff;border:1px solid #888;box-sizing:border-box"></div><svg style="left:1347px;top:222px;" width="9" height="5" viewBox="0 0 9 5"><path d="M0 4.5 H9 L4.5 0 Z" fill="#000"/></svg><div class="a" style="left:1344px;top:265px;width:15px;height:194px;background:#fff;border:1px solid #999;box-sizing:border-box"></div><div class="a" style="left:1344px;top:689px;width:15px;height:15px;background:#fff;border:1px solid #888;box-sizing:border-box"></div><svg style="left:1347px;top:694px;" width="9" height="5" viewBox="0 0 9 5"><path d="M0 0 H9 L4.5 4.5 Z" fill="#000"/></svg><svg style="left:0;top:0" width="1360" height="706" viewBox="0 0 1360 706">
<defs>
<clipPath id="pg"><rect x="463" y="215" width="790" height="491"/></clipPath>
<clipPath id="lc"><rect x="520" y="215" width="210" height="81.5"/></clipPath>
<clipPath id="circ"><circle cx="623" cy="277" r="95.5"/></clipPath>
<linearGradient id="pink" x1="0" y1="0" x2="0" y2="1"><stop offset="0" stop-color="#f49a7e"/><stop offset="1" stop-color="#ee7f8a"/></linearGradient>
</defs>
<g clip-path="url(#pg)">
<polygon points="471,215 529,215 471,308" fill="#7cb4dc"/>
<polygon points="483,215 511,215 509,218.3 482.5,218.3" fill="#efeb7c"/>
<polygon points="787.5,215 1243,215 1243,318.6 724.3,318.6" fill="#80c696"/>
<polygon points="800,215 866.5,215 792.2,336.6 724.3,336.6" fill="#efeb7c"/>
<polygon points="1201,255.3 1220.3,255.3 1185,316.2 1165.9,316.2" fill="#f6f07a"/>
<polygon points="1222,255.3 1241.5,255.3 1205.6,316.2 1186.5,316.2" fill="#ffffff"/>
<polygon points="1243,257 1243,285 1224.7,316.2 1206.5,316.2" fill="#c9dc89"/>
<g clip-path="url(#lc)"><g clip-path="url(#circ)">
<rect x="520" y="180" width="210" height="120" fill="#7db6de"/>
<!-- sun -->
<g transform="translate(617 221)" fill="#f8c45e">
<rect x="-3" y="-15" width="6" height="30" transform="rotate(0)"/><rect x="-3" y="-15" width="6" height="30" transform="rotate(45)"/>
<rect x="-3" y="-15" width="6" height="30" transform="rotate(90)"/><rect x="-3" y="-15" width="6" height="30" transform="rotate(135)"/>
<circle r="8.5" fill="#f7e56a"/><circle r="4.5" fill="#7db6de"/>
</g>
<polygon points="604,252 631,235.5 652,246 640,256" fill="#f8d36a"/>
<path d="M520 300 L560 262 L592 234 L640 252 L656 237 L700 255 L730 300 Z" fill="#87ca8f"/>
<!-- river -->
<path d="M592 240 Q612 246 598 255 Q590 262 612 266 Q640 270 660 276 Q690 284 700 300 L620 300 Q612 292 632 286 Q610 280 600 272 Q585 262 592 240 Z" fill="#a9d2ee"/>
<path d="M592 236 Q616 242 600 256 Q592 262 614 266 Q654 272 680 286" fill="none" stroke="#f6d36c" stroke-width="2.2"/>
<path d="M622 300 Q616 292 634 286 Q650 280 640 276" fill="none" stroke="#f6d36c" stroke-width="2.5"/>
<!-- palm tree -->
<g stroke="#eaf5ea" stroke-width="0.8" fill="#a4d2a9">
<path d="M675.5 272 L677 238 L680.5 272 Z" fill="#8cc596"/>
<path d="M677 235 Q662 218 652 230 Q664 228 677 238 Z"/>
<path d="M677 235 Q694 216 702 228 Q690 228 677 238 Z"/>
<path d="M677 236 Q656 236 654 254 Q666 242 677 239 Z"/>
<path d="M678 236 Q698 238 700 256 Q688 243 678 239 Z"/>
<path d="M677 235 Q668 218 676 214 Q684 222 678 236 Z"/>
<path d="M677 237 Q662 246 664 264 Q670 250 678 240 Z"/>
<path d="M678 237 Q692 246 690 264 Q686 250 678 240 Z"/>
</g>
<g fill="none" stroke="#f3faf3" stroke-width="0.6" opacity="0.9">
<path d="M656 229 Q666 230 676 236 M700 228 Q690 229 679 236 M656 252 Q664 242 676 238 M698 254 Q690 243 679 238"/>
</g>
<!-- leaves / fruits -->
<ellipse cx="552" cy="266" rx="10" ry="6" transform="rotate(30 552 266)" fill="#8cc08a" stroke="#f2f2e8" stroke-width="0.8"/>
<path d="M547 240 Q552 232 560 236 Q566 250 566 268 Q554 262 547 240 Z" fill="#f5a94c" stroke="#f9dfae" stroke-width="0.6"/>
<path d="M556 236 Q563 226 568 236 Q572 252 567 268 Q560 254 556 236 Z" fill="#ee8449" stroke="#f9dfae" stroke-width="0.6"/>
<ellipse cx="576" cy="252" rx="8" ry="11.5" fill="#f6c45e" stroke="#fbe5a6" stroke-width="0.8"/>
<path d="M572 246 L580 256 M572 254 L580 246 M571 250 L581 260 M571 260 L581 250" stroke="#eab04e" stroke-width="0.6"/>
<path d="M576 241 L569 226 L575 233 L576 223 L579 233 L585 226 L579 242 Z" fill="#8cc08a" stroke="#e8f2e0" stroke-width="0.5"/>
<!-- bridge -->
<path d="M531 300 Q578 246 625 250 Q672 252 719 300" fill="none" stroke="#b9805f" stroke-width="4"/>
<path d="M542 300 Q582 254 625 256 Q668 257 708 300" fill="none" stroke="#b9805f" stroke-width="1.8"/>
<rect x="536" y="282.6" width="180" height="3.4" fill="#b9805f"/>
<path d="M560 283 L572 262 M572 283 L562 266 M582 283 L596 256 M596 283 L584 259 M606 283 L618 254 M618 283 L606 255 M630 283 L642 254 M642 283 L630 254 M654 283 L666 256 M666 283 L654 255 M678 283 L690 263 M690 283 L678 259" stroke="#b9805f" stroke-width="1.1"/>
</g></g>
</g>
</svg><div class="t " style="left:531.00px;top:296.91px;font-size:30px;font-family:'Liberation Sans', sans-serif;font-weight:normal;color:#f2918a;">V</div><div class="t " style="left:553.20px;top:304.52px;font-size:21px;font-family:'Liberation Sans', sans-serif;font-weight:normal;color:#f2918a;transform:scaleX(1.3766);transform-origin:0 0;">alle</div><div class="t " style="left:607.40px;top:296.91px;font-size:30px;font-family:'Liberation Sans', sans-serif;font-weight:normal;color:#f2918a;">H</div><div class="t " style="left:626.70px;top:304.52px;font-size:21px;font-family:'Liberation Sans', sans-serif;font-weight:normal;color:#f2918a;transform:scaleX(1.3053);transform-origin:0 0;">ermoso</div><div class="t " style="left:626.50px;top:300.63px;font-size:10px;font-family:'Liberation Sans', sans-serif;font-weight:bold;color:#6aae86;transform:scaleX(0.9959);transform-origin:0 0;">GAD PARROQUIAL</div><div class="a" style="left:900px;top:215px;width:300px;height:8px;overflow:hidden"><div class="t " style="left:34.60px;top:-6.95px;font-size:14px;font-family:'Liberation Sans', sans-serif;font-weight:normal;color:#eef6f0;letter-spacing:0.626px;">RUC : 1760120000001</div></div><svg style="left:925px;top:240px;" width="12" height="13" viewBox="0 0 12 13"><path d="M2.5 0.8 Q1 1 0.8 3 Q1 8 5 11 Q8 13 10.5 12.5 Q11.5 12 11.2 10.8 L9.5 8.8 Q8.8 8.3 8 8.8 L7 9.5 Q4.5 8 3.5 5.5 L4.3 4.5 Q4.8 3.8 4.3 3 Z" fill="#f3f8f3"/></svg><svg style="left:923px;top:267px;" width="15" height="11" viewBox="0 0 15 11"><rect x="0.5" y="0.5" width="14" height="10" fill="#f3f8f3"/><path d="M0.5 0.8 L7.5 6 L14.5 0.8 M0.5 10.2 L5.5 5 M14.5 10.2 L9.5 5" fill="none" stroke="#80c696" stroke-width="1.2"/></svg><svg style="left:927px;top:290px;" width="9" height="13" viewBox="0 0 9 13"><path d="M1 0.5 L8.5 8 H5.3 L7.3 12 L5.5 12.7 L3.6 8.6 L1 11 Z" fill="#f3f8f3"/></svg><div class="t " style="left:945.80px;top:240.15px;font-size:14px;font-family:'Liberation Sans', sans-serif;font-weight:normal;color:#eef6f0;letter-spacing:-0.408px;">(02)2773220 / 2773300</div><div class="t " style="left:945.30px;top:264.33px;font-size:14.5px;font-family:'Liberation Sans', sans-serif;font-weight:normal;color:#eef6f0;letter-spacing:-0.032px;">gadprvallehermoso@hotmail.com</div><div class="t " style="left:945.30px;top:288.43px;font-size:14.5px;font-family:'Liberation Sans', sans-serif;font-weight:normal;color:#eef6f0;letter-spacing:0.096px;">www.vallehermoso.gob.ec</div><div class="t " style="left:957.00px;top:328.89px;font-size:19.5px;font-family:'Liberation Sans', sans-serif;font-weight:bold;color:#7f7f7f;letter-spacing:0.410px;">ADMINISTRATIVO</div><div class="t " style="left:910.60px;top:355.91px;font-size:14.67px;font-family:'Liberation Serif', serif;font-weight:normal;color:#000;letter-spacing:0.243px;">Valle Hermoso, 28</div><div class="t " style="left:1026.50px;top:355.91px;font-size:14.67px;font-family:'Liberation Serif', serif;font-weight:normal;color:#000;letter-spacing:0.051px;">de febrero del 2023</div><div class="a" style="left:1024px;top:357px;width:1px;height:14px;background:#000"></div><div class="t " style="left:902.60px;top:373.61px;font-size:14.67px;font-family:'Liberation Serif', serif;font-weight:normal;color:#000;letter-spacing:0.120px;">Oficio Nº 023-GADPRVH-OC-02-2023</div><svg style="left:945px;top:386px;" width="17" height="4" viewBox="0 0 17 4"><path d="M0 2.5 L1.5 1 L3 2.5 L4.5 1 L6 2.5 L7.5 1 L9 2.5 L10.5 1 L12 2.5 L13.5 1 L15 2.5 L16.5 1" fill="none" stroke="#e00" stroke-width="0.9"/></svg><div class="t " style="left:575.30px;top:422.71px;font-size:14.67px;font-family:'Liberation Serif', serif;font-weight:normal;color:#000;">Señor</div><div class="t " style="left:575.30px;top:438.51px;font-size:14.67px;font-family:'Liberation Serif', serif;font-weight:normal;color:#000;letter-spacing:0.153px;">Washington Morales Chávez</div><div class="t " style="left:575.30px;top:454.91px;font-size:14.67px;font-family:'Liberation Serif', serif;font-weight:bold;color:#000;letter-spacing:0.142px;">PRESIDENTE GAD PR VALLE HERMOSO</div><div class="t " style="left:575.30px;top:472.11px;font-size:14.67px;font-family:'Liberation Serif', serif;font-weight:normal;color:#000;letter-spacing:0.209px;">Presente. –</div><div class="a" style="left:571px;top:505px;width:575px;height:23px;background:#c9c9c9;border:1px solid #222;box-sizing:border-box"></div><div class="t " style="left:576.00px;top:508.60px;font-size:16px;font-family:'Liberation Serif', serif;font-weight:normal;color:#000;letter-spacing:0.097px;">ASUNTO:  SOLICITAR COMBUSTIBLE PARA VEHÍCULO</div><div class="t " style="left:575.00px;top:562.51px;font-size:14.67px;font-family:'Liberation Serif', serif;font-weight:normal;color:#000;letter-spacing:-0.045px;">Respetuosamente me dirijo a usted, con el objeto de solicitar su valiosa colaboración, a efecto me</div><div class="t " style="left:575.00px;top:578.71px;font-size:14.67px;font-family:'Liberation Serif', serif;font-weight:normal;color:#000;letter-spacing:0.015px;">pueda proporcionar combustible para el vehículo, que se detalla a continuación:</div><div class="a" style="left:559px;top:597px;width:15px;height:15px;border:1px solid #9a9a9a;box-sizing:border-box;background:#fff"></div><svg style="left:561px;top:599px;" width="11" height="11" viewBox="0 0 11 11"><path d="M5.5 0.5 V10.5 M0.5 5.5 H10.5 M3.5 2.5 L5.5 0.5 L7.5 2.5 M3.5 8.5 L5.5 10.5 L7.5 8.5 M2.5 3.5 L0.5 5.5 L2.5 7.5 M8.5 3.5 L10.5 5.5 L8.5 7.5" fill="none" stroke="#555" stroke-width="0.9"/></svg><div class="a" style="left:574px;top:612px;width:568px;height:57px;border:1px solid #000;box-sizing:border-box"></div><div class="a" style="left:574px;top:637px;width:568px;height:1px;background:#000"></div><div class="a" style="left:642.4px;top:612px;width:1px;height:57px;background:#000"></div><div class="a" style="left:737.4px;top:612px;width:1px;height:57px;background:#000"></div><div class="a" style="left:828.2px;top:612px;width:1px;height:57px;background:#000"></div><div class="a" style="left:927.3px;top:612px;width:1px;height:57px;background:#000"></div><div class="a" style="left:1071.2px;top:612px;width:1px;height:57px;background:#000"></div><div class="t " style="left:590.30px;top:619.29px;font-size:11px;font-family:'Liberation Serif', serif;font-weight:bold;color:#000;letter-spacing:-0.131px;">PLACA</div><div class="t " style="left:677.50px;top:613.59px;font-size:11px;font-family:'Liberation Serif', serif;font-weight:bold;color:#000;letter-spacing:-0.055px;">TIPO</div><div class="t " style="left:660.80px;top:626.29px;font-size:11px;font-family:'Liberation Serif', serif;font-weight:bold;color:#000;letter-spacing:-0.093px;">VEHICULO</div><div class="t " style="left:762.00px;top:619.29px;font-size:11px;font-family:'Liberation Serif', serif;font-weight:bold;color:#000;letter-spacing:-0.146px;">MARCA</div><div class="t " style="left:852.60px;top:619.29px;font-size:11px;font-family:'Liberation Serif', serif;font-weight:bold;color:#000;letter-spacing:0.089px;">MODELO</div><div class="t " style="left:979.70px;top:619.29px;font-size:11px;font-family:'Liberation Serif', serif;font-weight:bold;color:#000;letter-spacing:-0.065px;">CHASIS</div><div class="t " style="left:1087.40px;top:619.29px;font-size:11px;font-family:'Liberation Serif', serif;font-weight:bold;color:#000;letter-spacing:-0.030px;">COLOR</div><div class="t " style="left:594.00px;top:638.84px;font-size:13.33px;font-family:'Liberation Serif', serif;font-weight:normal;color:#000;letter-spacing:-0.318px;">PMF-</div><div class="t " style="left:594.50px;top:654.14px;font-size:13.33px;font-family:'Liberation Serif', serif;font-weight:normal;color:#000;letter-spacing:0.954px;">0115</div><div class="t " style="left:663.50px;top:646.84px;font-size:13.33px;font-family:'Liberation Serif', serif;font-weight:normal;color:#000;letter-spacing:-0.301px;">CAMION</div><div class="t " style="left:744.70px;top:646.84px;font-size:13.33px;font-family:'Liberation Serif', serif;font-weight:normal;color:#000;letter-spacing:-0.071px;">MITSUBISHI</div><div class="t " style="left:845.00px;top:638.84px;font-size:13.33px;font-family:'Liberation Serif', serif;font-weight:normal;color:#000;letter-spacing:0.092px;">CANTER 3</div><div class="t " style="left:864.00px;top:654.14px;font-size:13.33px;font-family:'Liberation Serif', serif;font-weight:normal;color:#000;letter-spacing:-0.060px;">TON</div><div class="t " style="left:935.00px;top:646.84px;font-size:13.33px;font-family:'Liberation Serif', serif;font-weight:normal;color:#000;letter-spacing:0.025px;">JL6AMB6H15K010914</div><div class="t " style="left:1080.60px;top:646.84px;font-size:13.33px;font-family:'Liberation Serif', serif;font-weight:normal;color:#000;letter-spacing:-0.345px;">BLANCO</div><div class="a" style="left:1142px;top:669px;width:15px;height:15px;border:1px solid #9a9a9a;box-sizing:border-box;background:#fff"></div><div class="a" style="left:989px;top:704.5px;width:1.5px;height:1.5px;background:#000;border-radius:1px"></div><div class="t " style="left:7.50px;top:711.79px;font-size:12px;font-family:'Liberation Sans', sans-serif;font-weight:normal;color:#404040;letter-spacing:-0.525px;">Página 1 de 1</div><div class="t " style="left:96.25px;top:711.79px;font-size:12px;font-family:'Liberation Sans', sans-serif;font-weight:normal;color:#404040;letter-spacing:-0.369px;">114 palabras</div><svg style="left:180px;top:709px;" width="15" height="14" viewBox="0 0 15 14"><path d="M0.5 1.5 H5 Q7 1.5 7 3.5 V13 Q7 11.5 5 11.5 H0.5 Z M7 3.5 Q7 1.5 9 1.5 H10 M7 13 V11.5" fill="none" stroke="#666" stroke-width="1"/><path d="M9.5 5.5 L13.5 9.5 M13.5 5.5 L9.5 9.5" stroke="#666" stroke-width="1.3"/></svg><div class="t " style="left:212.50px;top:711.79px;font-size:12px;font-family:'Liberation Sans', sans-serif;font-weight:normal;color:#404040;letter-spacing:-0.493px;">Español (Ecuador)</div><svg style="left:321px;top:709px;" width="19" height="15" viewBox="0 0 19 15"><path d="M7 3 A5 5 0 1 0 11 6" fill="none" stroke="#555" stroke-width="1.2" stroke-dasharray="2 1.2"/><path d="M7 0.5 V6.5 M5 4.5 L7 6.5 L9 4.5" fill="none" stroke="#555" stroke-width="1"/><path d="M9 8 L16 14.5 M16 8 L9 14.5" stroke="#444" stroke-width="1.8"/></svg><div class="t " style="left:341.20px;top:711.79px;font-size:12px;font-family:'Liberation Sans', sans-serif;font-weight:normal;color:#404040;letter-spacing:-0.284px;">Accesibilidad: es necesario investigar</div><svg style="left:1072px;top:710px;" width="15" height="13" viewBox="0 0 15 13"><path d="M0.5 1 H5 Q7.5 1 7.5 3 Q7.5 1 10 1 H14.5 V11 H10 Q7.5 11 7.5 12.5 Q7.5 11 5 11 H0.5 Z M7.5 3 V12" fill="none" stroke="#666" stroke-width="1"/><path d="M2 4 H6 M2 6 H6 M2 8 H6 M9 4 H13 M9 6 H13 M9 8 H13" stroke="#888" stroke-width="0.8"/></svg><div class="a" style="left:1100px;top:707px;width:40px;height:21px;background:#c8c8c8"></div><svg style="left:1112px;top:710px;" width="16" height="14" viewBox="0 0 16 14"><rect x="0.5" y="0.5" width="15" height="12" fill="none" stroke="#555" stroke-width="1"/><path d="M3 3.5 H13 M3 5.5 H13 M3 7.5 H13 M3 9.5 H13" stroke="#555" stroke-width="0.9"/></svg><svg style="left:1152px;top:709px;" width="17" height="15" viewBox="0 0 17 15"><rect x="0.5" y="1.5" width="12" height="10" fill="none" stroke="#666" stroke-width="1"/><path d="M2.5 4 H10 M2.5 6 H8 M2.5 8 H8" stroke="#777" stroke-width="0.9"/><circle cx="12" cy="10.5" r="3.5" fill="#f3f3f3" stroke="#666" stroke-width="1"/><path d="M10 9 L14 12" stroke="#666"/></svg><div class="a" style="left:1186px;top:716px;width:8px;height:1px;background:#555"></div><div class="a" style="left:1199px;top:716px;width:100px;height:1px;background:#888"></div><div class="a" style="left:1246px;top:711px;width:6px;height:12px;background:#555"></div><div class="a" style="left:1302px;top:716px;width:9px;height:1px;background:#555"></div><div class="a" style="left:1306px;top:712px;width:1px;height:9px;background:#555"></div><div class="t " style="left:1325.00px;top:711.79px;font-size:12px;font-family:'Liberation Sans', sans-serif;font-weight:normal;color:#404040;letter-spacing:-0.912px;">100%</div><svg style="left:16px;top:740px;" width="17" height="17" viewBox="0 0 17 17"><path d="M0 2.3 L7 1.3 V8 H0 Z M8 1.1 L16.5 0 V8 H8 Z M0 9 H7 V15.7 L0 14.7 Z M8 9 H16.5 V17 L8 15.9 Z" fill="#fff"/></svg><svg style="left:63px;top:740px;" width="18" height="17" viewBox="0 0 18 17"><circle cx="10.5" cy="6.5" r="5.5" fill="none" stroke="#fff" stroke-width="1.4"/><path d="M6.5 10.5 L1 16" stroke="#fff" stroke-width="1.6"/></svg><svg style="left:111px;top:736px;" width="25" height="25" viewBox="0 0 25 25"><defs><linearGradient id="eg" x1="0" y1="0" x2="1" y2="1"><stop offset="0" stop-color="#35c1f1"/><stop offset="0.6" stop-color="#1b7fd6"/><stop offset="1" stop-color="#114a8b"/></linearGradient></defs>
<path d="M12.5 0.5 C5 0.5 0.5 6 0.5 12.5 C0.5 19.5 6 24.5 12.5 24.5 C17 24.5 21 22 23.5 18.5 C20 20.5 14 20.5 11 17 C8.5 14 9.5 9.5 14 9 C18.5 8.5 20.5 12.5 19 15.5 L24 15 C25 8 20.5 0.5 12.5 0.5 Z" fill="url(#eg)"/>
<path d="M0.5 12.5 C1.5 7 6 4.5 10 5 C14 5.5 16 8 14 9 C9.5 9.5 8.5 14 11 17 C12.5 19 15 20.5 18 21 C10 25 1 21 0.5 12.5 Z" fill="#37c26b" opacity="0.55"/></svg><svg style="left:160px;top:736px;" width="25" height="25" viewBox="0 0 25 25"><circle cx="12.5" cy="12.5" r="12" fill="#db4437"/>
<path d="M12.5 12.5 L23.9 8.8 A12 12 0 0 1 6.5 22.9 Z" fill="#f4c20d"/>
<path d="M12.5 12.5 L6.5 22.9 A12 12 0 0 1 2.1 6.5 Z" fill="#0f9d58"/>
<circle cx="12.5" cy="12.5" r="5.6" fill="#fff"/><circle cx="12.5" cy="12.5" r="4.4" fill="#4285f4"/></svg><div class="a" style="left:197px;top:728px;width:45px;height:40px;background:#2d2d2d"></div><div class="a" style="left:242px;top:728px;width:3px;height:40px;background:#232323"></div><div class="a" style="left:197px;top:766px;width:48px;height:2px;background:#76b9ed"></div><svg style="left:208px;top:736px;" width="26" height="23" viewBox="0 0 26 23"><rect x="7" y="0.5" width="18" height="22" rx="1.5" fill="#41a5ee"/><rect x="7" y="6" width="18" height="5.5" fill="#2b7cd3"/><rect x="7" y="11.5" width="18" height="5.5" fill="#185abd"/><rect x="7" y="17" width="18" height="5.5" rx="1" fill="#103f91"/><rect x="0.5" y="5" width="12.5" height="13" rx="1" fill="#185abd"/><path d="M2.5 8 L4 15 L6.5 10 L9 15 L10.8 8" fill="none" stroke="#fff" stroke-width="1.4"/></svg><svg style="left:259px;top:738px;" width="23" height="19" viewBox="0 0 23 19"><path d="M0.5 2 Q0.5 0.5 2 0.5 H8 L10 2.5 H21 Q22.5 2.5 22.5 4 V17 Q22.5 18.5 21 18.5 H2 Q0.5 18.5 0.5 17 Z" fill="#f8c04e"/><rect x="0.5" y="5" width="22" height="13.5" fill="#ffd766"/><path d="M6 18.5 V12 H17 V18.5 H14 V15 H9 V18.5 Z" fill="#2a85d4"/></svg><div class="a" style="left:250px;top:766px;width:31px;height:2px;background:#76b9ed"></div><div class="a" style="left:282px;top:766px;width:8px;height:2px;background:#4a7595"></div><svg style="left:307px;top:736px;" width="25" height="23" viewBox="0 0 25 23"><rect x="7" y="0.5" width="17.5" height="22" rx="1.5" fill="#21a366"/><rect x="7" y="0.5" width="9" height="11" fill="#33c481"/><rect x="7" y="11.5" width="17.5" height="11" rx="1" fill="#107c41"/><rect x="16" y="11.5" width="8.5" height="11" fill="#185c37"/><rect x="0.5" y="5" width="12.5" height="13" rx="1" fill="#107c41"/><path d="M3.5 8 L10 15 M10 8 L3.5 15" stroke="#fff" stroke-width="1.6"/></svg><svg style="left:356px;top:736px;" width="24" height="24" viewBox="0 0 24 24"><defs><radialGradient id="ff" cx="0.7" cy="0.2" r="0.9"><stop offset="0" stop-color="#ffe226"/><stop offset="0.5" stop-color="#ff7139"/><stop offset="1" stop-color="#e31587"/></radialGradient></defs>
<circle cx="12" cy="13" r="11" fill="url(#ff)"/><path d="M17 0.5 Q24 6 22 12 Q19 4 14 3 Z" fill="#ffbd4f"/><circle cx="12.5" cy="13.5" r="5.5" fill="#7542e5"/><path d="M4 9 Q8 6 12 8 Q8 8 7 11 Z" fill="#ff980e"/></svg><svg style="left:406px;top:736px;" width="23" height="23" viewBox="0 0 23 23"><circle cx="11.5" cy="11.5" r="11" fill="#1ed760"/><path d="M5 8.2 Q11.5 6 18 9 M6 11.8 Q11.5 10 16.5 12.5 M7 15 Q11.5 13.8 15.5 15.8" fill="none" stroke="#000" stroke-width="2" stroke-linecap="round"/></svg><div class="a" style="left:397px;top:766px;width:40px;height:2px;background:#76b9ed"></div><svg style="left:454px;top:736px;" width="25" height="25" viewBox="0 0 25 25"><circle cx="12.5" cy="12.5" r="12" fill="#db4437"/>
<path d="M12.5 12.5 L23.9 8.8 A12 12 0 0 1 6.5 22.9 Z" fill="#f4c20d"/>
<path d="M12.5 12.5 L6.5 22.9 A12 12 0 0 1 2.1 6.5 Z" fill="#0f9d58"/>
<circle cx="12.5" cy="12.5" r="5.6" fill="#fff"/><circle cx="12.5" cy="12.5" r="4.4" fill="#4285f4"/></svg><svg style="left:466px;top:746px;" width="15" height="15" viewBox="0 0 15 15"><circle cx="7.5" cy="7.5" r="7" fill="#9a9a9a"/><circle cx="7.5" cy="7.5" r="4" fill="#555"/><circle cx="5" cy="6" r="1.5" fill="#ddd"/><circle cx="10" cy="6" r="1.5" fill="#ddd"/></svg><div class="a" style="left:446px;top:766px;width:40px;height:2px;background:#76b9ed"></div><svg style="left:502px;top:736px;" width="25" height="24" viewBox="0 0 25 24"><path d="M11 5 C4 5 0.5 9 0.5 13.5 C0.5 18 4 20 7 19 C9 18.5 9.5 17 12 18 C15 19 19 17 20 13 C21 9 17 5 11 5 Z" fill="#d9e8f5"/><circle cx="5" cy="12" r="1.8" fill="#e04a3a"/><circle cx="8.5" cy="9" r="1.8" fill="#f4b33d"/><circle cx="13" cy="8.5" r="1.8" fill="#46a847"/><circle cx="6.5" cy="15.5" r="1.8" fill="#3d87d8"/><path d="M24 0.5 L13 17 L11.5 20 L14 18 L24.5 1.5 Z" fill="#e8a24c"/><path d="M23 0 L25 1.5 L22 5 L20.5 4 Z" fill="#c97b2b"/></svg><div class="a" style="left:495px;top:766px;width:40px;height:2px;background:#76b9ed"></div><svg style="left:1116px;top:743px;" width="14" height="9" viewBox="0 0 14 9"><path d="M1 7.5 L7 1.5 L13 7.5" fill="none" stroke="#fff" stroke-width="1.3"/></svg><svg style="left:1141px;top:740px;" width="14" height="17" viewBox="0 0 14 17"><path d="M3 1 H11 M3 16 H11" stroke="#fff" stroke-width="1.1"/><rect x="0.6" y="4" width="8" height="8" rx="1.5" fill="none" stroke="#fff" stroke-width="1.1"/><path d="M9 6 L13 4 V12 L9 10" fill="none" stroke="#fff" stroke-width="1.1"/></svg><svg style="left:1162px;top:740px;" width="18" height="17" viewBox="0 0 18 17"><rect x="4.5" y="0.6" width="13" height="9" fill="none" stroke="#fff" stroke-width="1.1"/><path d="M11 9.6 V13 M7 13 H15" stroke="#fff" stroke-width="1.1"/><rect x="0.6" y="4" width="5" height="12" fill="#101010" stroke="#fff" stroke-width="1.1"/></svg><svg style="left:1186px;top:740px;" width="17" height="17" viewBox="0 0 17 17"><path d="M0.6 6 H4 L8.5 1.5 V15.5 L4 11 H0.6 Z" fill="none" stroke="#fff" stroke-width="1.1"/><path d="M11 5.5 Q12.5 8.5 11 11.5 M13.5 3.5 Q16 8.5 13.5 13.5" fill="none" stroke="#fff" stroke-width="1.1"/></svg><div class="t " style="left:1215.00px;top:742.04px;font-size:12px;font-family:'Liberation Sans', sans-serif;font-weight:normal;color:#fff;letter-spacing:-2.005px;">ESP</div><div class="t " style="left:1261.00px;top:733.04px;font-size:12px;font-family:'Liberation Sans', sans-serif;font-weight:normal;color:#fff;letter-spacing:-0.784px;">09:44</div><div class="t " style="left:1249.00px;top:751.54px;font-size:12px;font-family:'Liberation Sans', sans-serif;font-weight:normal;color:#fff;letter-spacing:-0.163px;">13/4/2023</div><svg style="left:1319px;top:739px;" width="25" height="25" viewBox="0 0 25 25"><path d="M0.6 0.6 H18.4 V14.4 H10 L5 18.5 V14.4 H0.6 Z" fill="#fff"/><path d="M3.5 4.5 H15.5 M3.5 7.5 H15.5 M3.5 10.5 H12" stroke="#101010" stroke-width="1.1"/><circle cx="17" cy="17" r="7.2" fill="#3d3d3d" stroke="#101010" stroke-width="1.2"/><text x="17" y="21" text-anchor="middle" font-family="Liberation Sans" font-weight="bold" font-size="11" fill="#fff">1</text></svg><div class="a" style="left:1355px;top:728px;width:1px;height:40px;background:#5a5a5a"></div>
</body></html>
